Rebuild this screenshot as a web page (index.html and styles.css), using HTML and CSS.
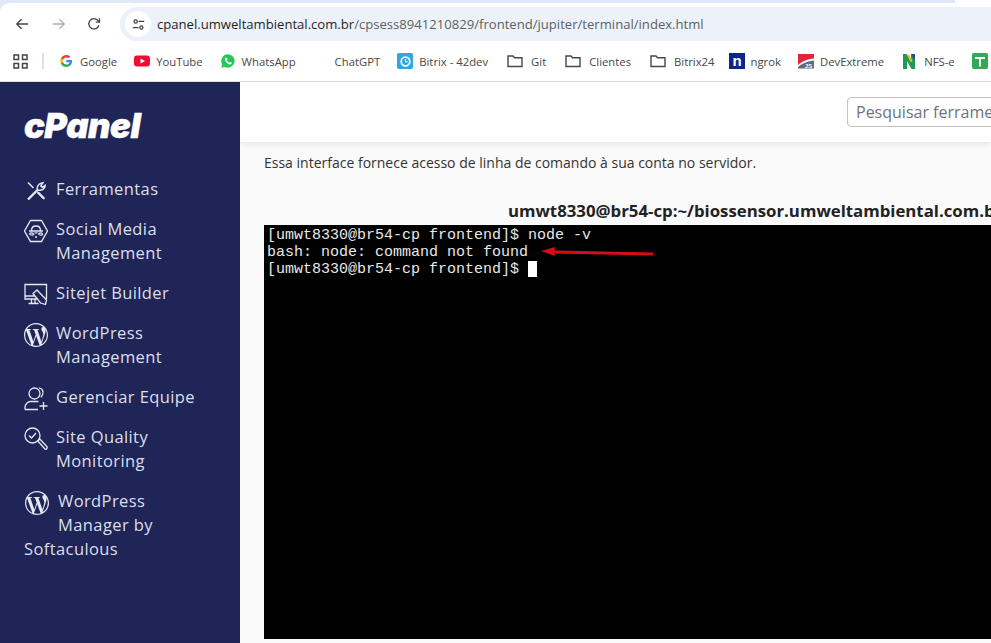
FILE: index.html
```html
<!DOCTYPE html>
<html lang="pt-BR">
<head>
<meta charset="utf-8">
<title>Terminal - cPanel</title>
<link rel="stylesheet" href="styles.css">
</head>
<body>
<div class="chrome">
  <div class="toolbar">
    <svg class="nav-icon nav-back" viewBox="0 0 16 16"><path d="M15 8H2M7.5 2.5 2 8l5.500 5.500"/></svg>
    <svg class="nav-icon nav-fwd" viewBox="0 0 16 16"><path d="M1 8h13M8.500 2.500 14 8l-5.500 5.500"/></svg>
    <svg class="nav-icon nav-reload" viewBox="0 0 16 16"><path d="M13.600 9.500A5.900 5.900 0 1 1 12.400 3.800L14 5.500M14.200 1.500v4.300H10"/></svg>
    <div class="omnibox">
      <span class="site-info">
        <svg viewBox="0 0 16 16"><circle cx="4.500" cy="4.200" r="2"/><path d="M8 4.200h7M1 11.800h7"/><circle cx="11.500" cy="11.800" r="2"/></svg>
      </span>
      <span class="url"><span class="url-host">cpanel.umweltambiental.com.br</span>/cpsess8941210829/frontend/jupiter/terminal/index.html</span>
    </div>
  </div>
  <div class="bookmarks">
    <svg class="apps" viewBox="0 0 15 15"><path d="M1 1h4.500v4.500H1zM9.500 1H14v4.500H9.500zM1 9.500h4.500V14H1zM9.500 9.500H14V14H9.500z"/></svg>
    <span class="bm-sep"></span>
    <a class="bm bm-google">
      <svg class="bm-icon" viewBox="-2 -3.300 30.700 30.700"><path fill="#4285F4" d="M23 12.300c0-.8-.1-1.600-.2-2.300H12v4.400h6.200c-.3 1.400-1.100 2.600-2.300 3.400v2.800h3.700c2.100-2 3.400-4.900 3.400-8.300z"/><path fill="#34A853" d="M12 23.500c3.100 0 5.700-1 7.600-2.800l-3.700-2.900c-1 .7-2.300 1.100-3.900 1.100-3 0-5.500-2-6.400-4.700H1.800v2.900c1.900 3.800 5.800 6.400 10.200 6.400z"/><path fill="#FBBC05" d="M5.600 14.200c-.5-1.400-.5-3 0-4.400V6.900H1.800c-1.600 3.200-1.600 7 0 10.200l3.800-2.900z"/><path fill="#EA4335" d="M12 5.100c1.700 0 3.200.6 4.400 1.700l3.300-3.300C17.700 1.600 15.100.5 12 .5 7.600.5 3.700 3.100 1.800 6.900l3.800 2.900c.9-2.700 3.400-4.700 6.400-4.700z"/></svg>
      <span>Google</span>
    </a>
    <a class="bm bm-youtube">
      <svg class="bm-icon" viewBox="0 0 16 16"><rect y="2.500" width="16" height="11" rx="3" fill="#f00d33"/><path d="M6.500 5.500v5L11 8z" fill="#fff"/></svg>
      <span>YouTube</span>
    </a>
    <a class="bm bm-whatsapp">
      <svg class="bm-icon" viewBox="0 0 16 16"><path d="M8 1.200a6.700 6.700 0 0 0-5.800 10.100L1.300 14.800l3.600-.9A6.700 6.700 0 1 0 8 1.200z" fill="#25c65a"/><path d="M5.800 4.500c-.6.300-1 1-.9 1.700.2 2.300 2.600 4.900 5 5.200.8.100 1.500-.4 1.800-1.100l-.2-.7-1.500-.7-.7.800c-1-.3-2-1.300-2.400-2.400l.7-.7-.6-1.600-.6-.2z" fill="#fff"/></svg>
      <span>WhatsApp</span>
    </a>
    <a class="bm bm-chatgpt">
      <span class="bm-icon bm-blank"></span>
      <span>ChatGPT</span>
    </a>
    <a class="bm bm-bitrix">
      <svg class="bm-icon" viewBox="0 0 16 16"><rect width="16" height="16" rx="2" fill="#2fa8dd"/><circle cx="8.500" cy="8.500" r="4.300" fill="none" stroke="#fff" stroke-width="1.700"/><path d="M8.500 6v2.700h2.200" fill="none" stroke="#fff" stroke-width="1.100"/></svg>
      <span>Bitrix - 42dev</span>
    </a>
    <a class="bm bm-folder">
      <svg class="bm-icon folder" viewBox="0 0 16 16"><path d="M1 3h5l1.500 1.800H15V13.500H1z"/></svg>
      <span>Git</span>
    </a>
    <a class="bm bm-folder">
      <svg class="bm-icon folder" viewBox="0 0 16 16"><path d="M1 3h5l1.500 1.800H15V13.500H1z"/></svg>
      <span>Clientes</span>
    </a>
    <a class="bm bm-folder">
      <svg class="bm-icon folder" viewBox="0 0 16 16"><path d="M1 3h5l1.500 1.800H15V13.500H1z"/></svg>
      <span>Bitrix24</span>
    </a>
    <a class="bm bm-ngrok">
      <svg class="bm-icon" viewBox="0 0 16 16"><rect width="16" height="16" fill="#0a2787"/><text x="8" y="13" text-anchor="middle" class="ngrok-n">n</text></svg>
      <span>ngrok</span>
    </a>
    <a class="bm bm-dev">
      <svg class="bm-icon" viewBox="0 0 16 16"><path d="M0 1h16v4.500C9 6 4 8.500 0 12z" fill="#e3243b"/><path d="M0 15.500V14c4-3.500 9.500-6 16-6.500v8z" fill="#5f6b78"/><text x="10.500" y="14.500" text-anchor="middle" class="dev-js">JS</text></svg>
      <span>DevExtreme</span>
    </a>
    <a class="bm bm-nfs">
      <svg class="bm-icon" viewBox="0 0 16 16"><path d="M2 1h3.500L10 9V1h4v15h-3.500L6 8v8H2z" fill="#1f9a55"/><path d="M10 1h4v7z" fill="#2a4a9c"/><path d="M8 1.200 11.500 8 10 9 6 1.500z" fill="#f1c40f"/></svg>
      <span>NFS-e</span>
    </a>
    <svg class="bm-icon" viewBox="0 0 16 16"><rect width="16" height="16" rx="2" fill="#34a853"/><path d="M3 5h10M8 5v8.500" fill="none" stroke="#fff" stroke-width="2"/></svg>
  </div>
</div>

<div class="app">
  <nav class="sidebar">
    <div class="logo">cPanel</div>
    <ul class="menu">
      <li class="menu-item">
        <svg class="menu-icon icon-tools" viewBox="0 0 24 24"><path d="M4 3.500 9.500 9M13.500 13l7 7" /><path class="thick" d="M14 13.500 20 19.500M4 20.500l9.500-9.500"/><path d="M13.500 11c-1-2.500.5-6 3.500-6.800l1.800-.4-2 3 1.400 1.500 3-2c0 3.500-3.500 6-7.700 4.700z"/></svg>
        <span>Ferramentas</span>
      </li>
      <li class="menu-item">
        <svg class="menu-icon" viewBox="0 0 24 24"><path d="M6.500 1.500h11L23.500 12l-6 10.500h-11L.5 12z"/><path d="M7.500 11.500c0-6 9-6 9 0M5 12h14M5.500 15c1-1.500 3-1.500 4 0s-3 1.500-4 0zM14.500 15c1-1.500 3-1.500 4 0s-3 1.500-4 0zM10.500 13.800h3M11 18h2"/></svg>
        <span>Social Media Management</span>
      </li>
      <li class="menu-item">
        <svg class="menu-icon" viewBox="0 0 24 24"><path d="M14 16H1V1.500h21.500V16M1 13h10M7.500 16v4M11 16v4M4.500 20.500h10M13 7l9.500 10-1 4.500L16.500 20 9 10.500z"/></svg>
        <span>Sitejet Builder</span>
      </li>
      <li class="menu-item">
        <svg class="menu-icon wp" viewBox="2 2 20 20"><path d="M12 2C6.486 2 2 6.486 2 12s4.486 10 10 10 10-4.486 10-10S17.514 2 12 2zM3.009 12c0-1.298.29-2.529.8-3.648l4.358 11.94C5.100 18.880 3.009 15.692 3.009 12zm8.991 8.991c-.881 0-1.730-.128-2.533-.364l2.690-7.815 2.755 7.549a.812.812 0 0 0 .066.127 8.950 8.950 0 0 1-2.978.503zm1.237-13.209c.54-.028 1.026-.085 1.026-.085.483-.057.426-.767-.057-.74 0 0-1.452.114-2.389.114-.881 0-2.361-.114-2.361-.114-.483-.027-.54.711-.057.74 0 0 .457.057.94.085l1.396 3.826-1.961 5.880-3.263-9.706c.54-.028 1.026-.085 1.026-.085.483-.057.426-.767-.057-.74 0 0-1.452.114-2.389.114-.168 0-.366-.004-.577-.011A8.978 8.978 0 0 1 12 3.009c2.340 0 4.472.895 6.071 2.360-.039-.002-.077-.007-.117-.007-.882 0-1.508.768-1.508 1.593 0 .74.427 1.366.882 2.106.341.597.74 1.366.74 2.475 0 .768-.295 1.660-.683 2.900l-.895 2.990-3.253-9.644zm3.283 11.994 2.745-7.934c.513-1.282.683-2.306.683-3.217 0-.33-.022-.637-.061-.924a8.952 8.952 0 0 1 1.104 4.319 8.985 8.985 0 0 1-4.471 7.756z"/></svg>
        <span>WordPress Management</span>
      </li>
      <li class="menu-item">
        <svg class="menu-icon" viewBox="0 0 24 24"><circle cx="10.500" cy="6.500" r="5.500"/><path d="M15 .8c3.500.5 5 4 3.500 7-.5 1-1 2-1.500 2.500M1 22.500v-2c0-3.500 3-6 5.500-6h8M1 22.500h13M19.500 15v8M15.500 19h8"/></svg>
        <span>Gerenciar Equipe</span>
      </li>
      <li class="menu-item">
        <svg class="menu-icon" viewBox="0 0 24 24"><circle cx="8.500" cy="8.500" r="7.500"/><path d="M5 8.500l2.500 2.500 4.500-5M13.800 14l2-2 7 7.500c.6.700.5 1.500 0 2.200-.6.600-1.500.6-2.100 0z"/></svg>
        <span>Site Quality Monitoring</span>
      </li>
      <li class="menu-item menu-item-wrap">
        <svg class="menu-icon wp" viewBox="2 2 20 20"><path d="M12 2C6.486 2 2 6.486 2 12s4.486 10 10 10 10-4.486 10-10S17.514 2 12 2zM3.009 12c0-1.298.29-2.529.8-3.648l4.358 11.94C5.100 18.880 3.009 15.692 3.009 12zm8.991 8.991c-.881 0-1.730-.128-2.533-.364l2.690-7.815 2.755 7.549a.812.812 0 0 0 .066.127 8.950 8.950 0 0 1-2.978.503zm1.237-13.209c.54-.028 1.026-.085 1.026-.085.483-.057.426-.767-.057-.74 0 0-1.452.114-2.389.114-.881 0-2.361-.114-2.361-.114-.483-.027-.54.711-.057.74 0 0 .457.057.94.085l1.396 3.826-1.961 5.880-3.263-9.706c.54-.028 1.026-.085 1.026-.085.483-.057.426-.767-.057-.74 0 0-1.452.114-2.389.114-.168 0-.366-.004-.577-.011A8.978 8.978 0 0 1 12 3.009c2.340 0 4.472.895 6.071 2.360-.039-.002-.077-.007-.117-.007-.882 0-1.508.768-1.508 1.593 0 .74.427 1.366.882 2.106.341.597.74 1.366.74 2.475 0 .768-.295 1.660-.683 2.900l-.895 2.990-3.253-9.644zm3.283 11.994 2.745-7.934c.513-1.282.683-2.306.683-3.217 0-.33-.022-.637-.061-.924a8.952 8.952 0 0 1 1.104 4.319 8.985 8.985 0 0 1-4.471 7.756z"/></svg>
        <span>WordPress Manager by Softaculous</span>
      </li>
    </ul>
  </nav>
  <main class="main">
    <header class="topbar">
      <input class="search" type="text" placeholder="Pesquisar ferramentas">
    </header>
    <section class="content">
      <p class="intro">Essa interface fornece acesso de linha de comando à sua conta no servidor.</p>
      <h2 class="term-title">umwt8330@br54-cp:~/biossensor.umweltambiental.com.br/frontend</h2>
      <div class="terminal">
<pre class="term-text">[umwt8330@br54-cp frontend]$ node -v
bash: node: command not found
[umwt8330@br54-cp frontend]$ <span class="cursor"></span></pre>
        <svg class="annot" viewBox="0 0 120 16"><path d="M3 7 17 3 16.500 6.500 115 8.500 115 11.500 16.500 9.500 17 12z"/></svg>
      </div>
    </section>
  </main>
</div>
</body>
</html>
```
FILE: styles.css
```css
* { box-sizing: border-box; }
html, body { margin: 0; height: 643px; overflow: hidden; background: #fff; }
body { font-family: "Open Sans", sans-serif; }

/* browser chrome */
.chrome {
  height: 82px;
  padding-top: 3px;
  background: linear-gradient(to right, #dfe8f6 955px, #fff 955px);
  overflow: hidden;
}
.toolbar {
  display: flex;
  align-items: center;
  height: 38px;
  padding: 4px 0 0 15px;
  background: #fff;
  border-radius: 9px 0 0 0;
}
.nav-icon { width: 14px; height: 14px; fill: none; stroke: #474747; stroke-width: 1.500; flex: none; }
.nav-fwd { margin-left: 23px; stroke: #b0b0b0; }
.nav-reload { margin-left: 21px; }
.omnibox {
  flex: 1;
  display: flex;
  align-items: center;
  height: 34px;
  margin-left: 19px;
  padding-left: 5px;
  background: #edf2fa;
  border-radius: 17px 0 0 17px;
}
.site-info {
  display: flex;
  align-items: center;
  justify-content: center;
  width: 26px;
  height: 26px;
  background: #fff;
  border-radius: 50%;
}
.site-info svg { width: 13px; height: 13px; fill: none; stroke: #444; stroke-width: 1.500; }
.url { margin-left: 6px; font-size: 13.100px; color: #5c5f62; white-space: nowrap; }
.url-host { color: #1f1f1f; }
.bookmarks {
  display: flex;
  align-items: center;
  gap: 17px;
  height: 41px;
  padding-left: 13px;
  border-bottom: 1px solid #dcdcdc;
  background: #fff;
}
.apps { width: 15px; height: 15px; flex: none; fill: none; stroke: #444; stroke-width: 1.500; }
.bm-sep { width: 2px; height: 16px; margin: 0 -2px 0 -3px; background: #d6e0ee; flex: none; }
.bm { display: flex; align-items: center; gap: 6px; font-size: 11.300px; color: #474747; white-space: nowrap; }
.bm-google { gap: 5px; }
.bm-folder { gap: 8px; margin-left: 2px; }
.bm-ngrok { margin-left: -3px; }
.bm-nfs { gap: 7px; }
.bm-icon { display: block; width: 16px; height: 16px; flex: none; }
.folder { fill: none; stroke: #474747; stroke-width: 1.400; }
.ngrok-n { font: 700 15px "Liberation Sans", sans-serif; fill: #fff; }
.dev-js { font: 700 6px "Liberation Sans", sans-serif; fill: #fff; }

/* page */
.app { display: flex; height: 561px; }
.sidebar {
  width: 240px;
  flex: none;
  padding: 26px 24px 0;
  background: #1f2556;
  color: #dcdfec;
}
.logo {
  height: 38px;
  font: italic 900 34.500px/36px Inter, sans-serif;
  letter-spacing: -0.400px;
  color: #fff;
  -webkit-text-stroke: 0.500px #fff;
}
.menu { list-style: none; margin: 31px 0 0; padding: 0; }
.menu-item {
  display: flex;
  gap: 8px;
  margin-bottom: 16px;
  font-size: 16.500px;
  line-height: 24px;
  letter-spacing: 0.400px;
}
.menu-icon {
  width: 24px;
  height: 24px;
  margin: 2px 0 -2px;
  flex: none;
  fill: none;
  stroke: #e6e8f2;
  stroke-width: 1.300;
}
.icon-tools { stroke-width: 1.500; }
.icon-tools .thick { stroke-width: 2.400; }
.menu-icon.wp { fill: #e6e8f2; stroke: none; }
.menu-item-wrap { display: block; }
.menu-item-wrap .menu-icon {
  float: left;
  height: 46px;
  width: 24px;
  padding-bottom: 22px;
  margin: 2px 9px 0 1px;
}

.main { flex: 1; min-width: 0; overflow: hidden; background: #fafafa; }
.topbar {
  height: 60px;
  padding: 15px 0 0 607px;
  background: #fff;
  box-shadow: 0 2px 6px rgba(0, 0, 0, .08);
}
.search {
  display: block;
  width: 240px;
  height: 30px;
  padding: 0 8px;
  font: 16px "Open Sans", sans-serif;
  color: #555;
  background: #fff;
  border: 1px solid #bfc3c8;
  border-radius: 4px;
}
.search::placeholder { color: #6c757d; opacity: 1; }
.content { padding: 11px 0 0 24px; width: 1200px; }
.intro { margin: 0; font-size: 14px; line-height: 20px; color: #333; }
.term-title {
  margin: 27px 0 0;
  padding-left: 244px;
  font-size: 16.800px;
  font-weight: 700;
  line-height: 22px;
  color: #222;
  white-space: nowrap;
}
.terminal {
  position: relative;
  height: 414px;
  margin-top: 3px;
  background: #000;
  color: #e8e8e8;
}
.term-text {
  margin: 0;
  padding: 2px 0 0 3px;
  font: 15px/17px "Liberation Mono", monospace;
}
.cursor {
  display: inline-block;
  width: 9px;
  height: 16px;
  background: #fff;
  vertical-align: -4px;
}
.annot {
  position: absolute;
  left: 274px;
  top: 19px;
  width: 120px;
  height: 16px;
  fill: #d60d14;
}
```
